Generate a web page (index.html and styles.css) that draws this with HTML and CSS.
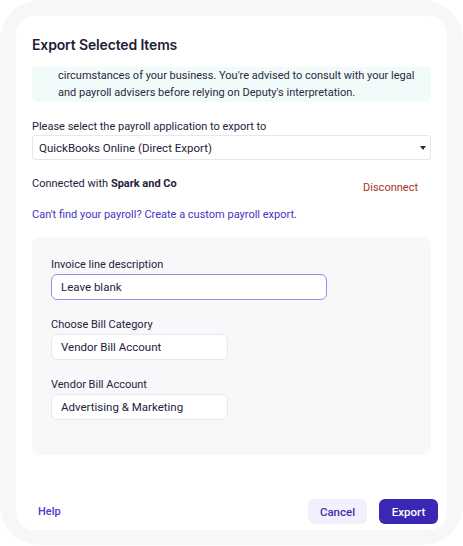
FILE: index.html
```html
<!DOCTYPE html>
<html>
<head>
<meta charset="utf-8">
<link rel="stylesheet" href="styles.css">
</head>
<body>
<div class="frame">
  <div class="card">
    <div class="header"><h1 class="title">Export Selected Items</h1></div>
    <div class="body">
      <div class="notice">
        <p>circumstances of your business. You're advised to consult with your legal<br>and payroll advisers before relying on Deputy's interpretation.</p>
      </div>
      <div class="field-label top">Please select the payroll application to export to</div>
      <div class="select">
        <span>QuickBooks Online (Direct Export)</span>
        <svg class="caret" width="6" height="4" viewBox="0 0 6 4"><path d="M0 0h6L3 4z" fill="#2a2840"/></svg>
      </div>
      <div class="connected">
        <span>Connected with <b>Spark and Co</b></span>
        <a class="disconnect">Disconnect</a>
      </div>
      <a class="custom-link">Can't find your payroll? Create a custom payroll export.</a>
      <div class="panel">
        <div class="group">
          <div class="label">Invoice line description</div>
          <div class="input wide focused">Leave blank</div>
        </div>
        <div class="group">
          <div class="label">Choose Bill Category</div>
          <div class="input">Vendor Bill Account</div>
        </div>
        <div class="group">
          <div class="label">Vendor Bill Account</div>
          <div class="input">Advertising &amp; Marketing</div>
        </div>
      </div>
    </div>
    <div class="footer">
      <a class="help">Help</a>
      <div class="actions">
        <button class="btn cancel">Cancel</button>
        <button class="btn export">Export</button>
      </div>
    </div>
  </div>
</div>
</body>
</html>
```

FILE: styles.css
```css
* { box-sizing: border-box; }
html, body { margin: 0; padding: 0; background: #ffffff; }
body {
  font-family: Roboto, "Noto Sans", sans-serif;
  color: #25233b;
  font-size: 11px;
}
.frame {
  width: 463px;
  height: 545px;
  background: #f7f7f9;
  border-radius: 40px;
  padding: 16px;
}
.card {
  background: #ffffff;
  border-radius: 18px;
  height: 514px;
  display: flex;
  flex-direction: column;
  overflow: hidden;
}
.header { padding: 19px 16px 13px; }
.title {
  margin: 0;
  font-family: Inter, Roboto, sans-serif;
  font-size: 14px;
  font-weight: 600;
  letter-spacing: -0.15px;
  color: #1f1c38;
  line-height: 19px;
}
.body {
  flex: 1;
  overflow: hidden;
  padding: 0 16px;
}
.notice {
  background: #f1fbf9;
  border-radius: 0 0 6px 6px;
  padding: 0 8px 1px 26px;
}
.notice p {
  margin: 0;
  line-height: 17px;
  color: #2b2940;
  white-space: nowrap;
}
.field-label.top { margin-top: 17px; line-height: 16px; }
.select {
  margin-top: 0;
  height: 25px;
  border: 1px solid #e6e6ec;
  border-radius: 3px;
  display: flex;
  align-items: center;
  justify-content: space-between;
  padding: 0 4px 0 6px;
  font-size: 11.5px;
}
.caret { margin-top: 1px; }
.connected {
  display: flex;
  justify-content: space-between;
  margin-top: 16px;
  line-height: 15px;
}
.connected b { font-weight: 700; }
.disconnect {
  color: #a9301f;
  margin-top: 4px;
  margin-right: 13px;
}
.custom-link {
  display: block;
  color: #4433c4;
  margin-top: 12px;
  line-height: 15px;
}
.panel {
  margin-top: 15px;
  background: #f8f8fa;
  border-radius: 8px;
  padding: 20px 19px 35px;
  display: flex;
  flex-direction: column;
  gap: 17px;
}
.group { display: flex; flex-direction: column; gap: 2px; }
.label { line-height: 15px; }
.input {
  width: 177px;
  height: 26px;
  background: #ffffff;
  border: 1px solid #e8e8ee;
  border-radius: 6px;
  padding: 0 9px;
  display: flex;
  align-items: center;
  font-size: 11.5px;
}
.input.wide { width: 276px; }
.input.focused { border-color: #9c8ce6; }
.footer {
  display: flex;
  justify-content: space-between;
  align-items: center;
  padding: 6px 9px 6px 22px;
  margin-top: auto;
}
.help { color: #4b3bc4; font-weight: 500; }
.actions { display: flex; gap: 12px; }
.btn {
  font-family: Roboto, "Noto Sans", sans-serif;
  font-size: 11.5px;
  font-weight: 500;
  height: 25px;
  width: 59px;
  border: none;
  border-radius: 6px;
}
.cancel { background: #f2f0fc; color: #3f32a8; }
.export { background: #3a28b4; color: #ffffff; }
```
